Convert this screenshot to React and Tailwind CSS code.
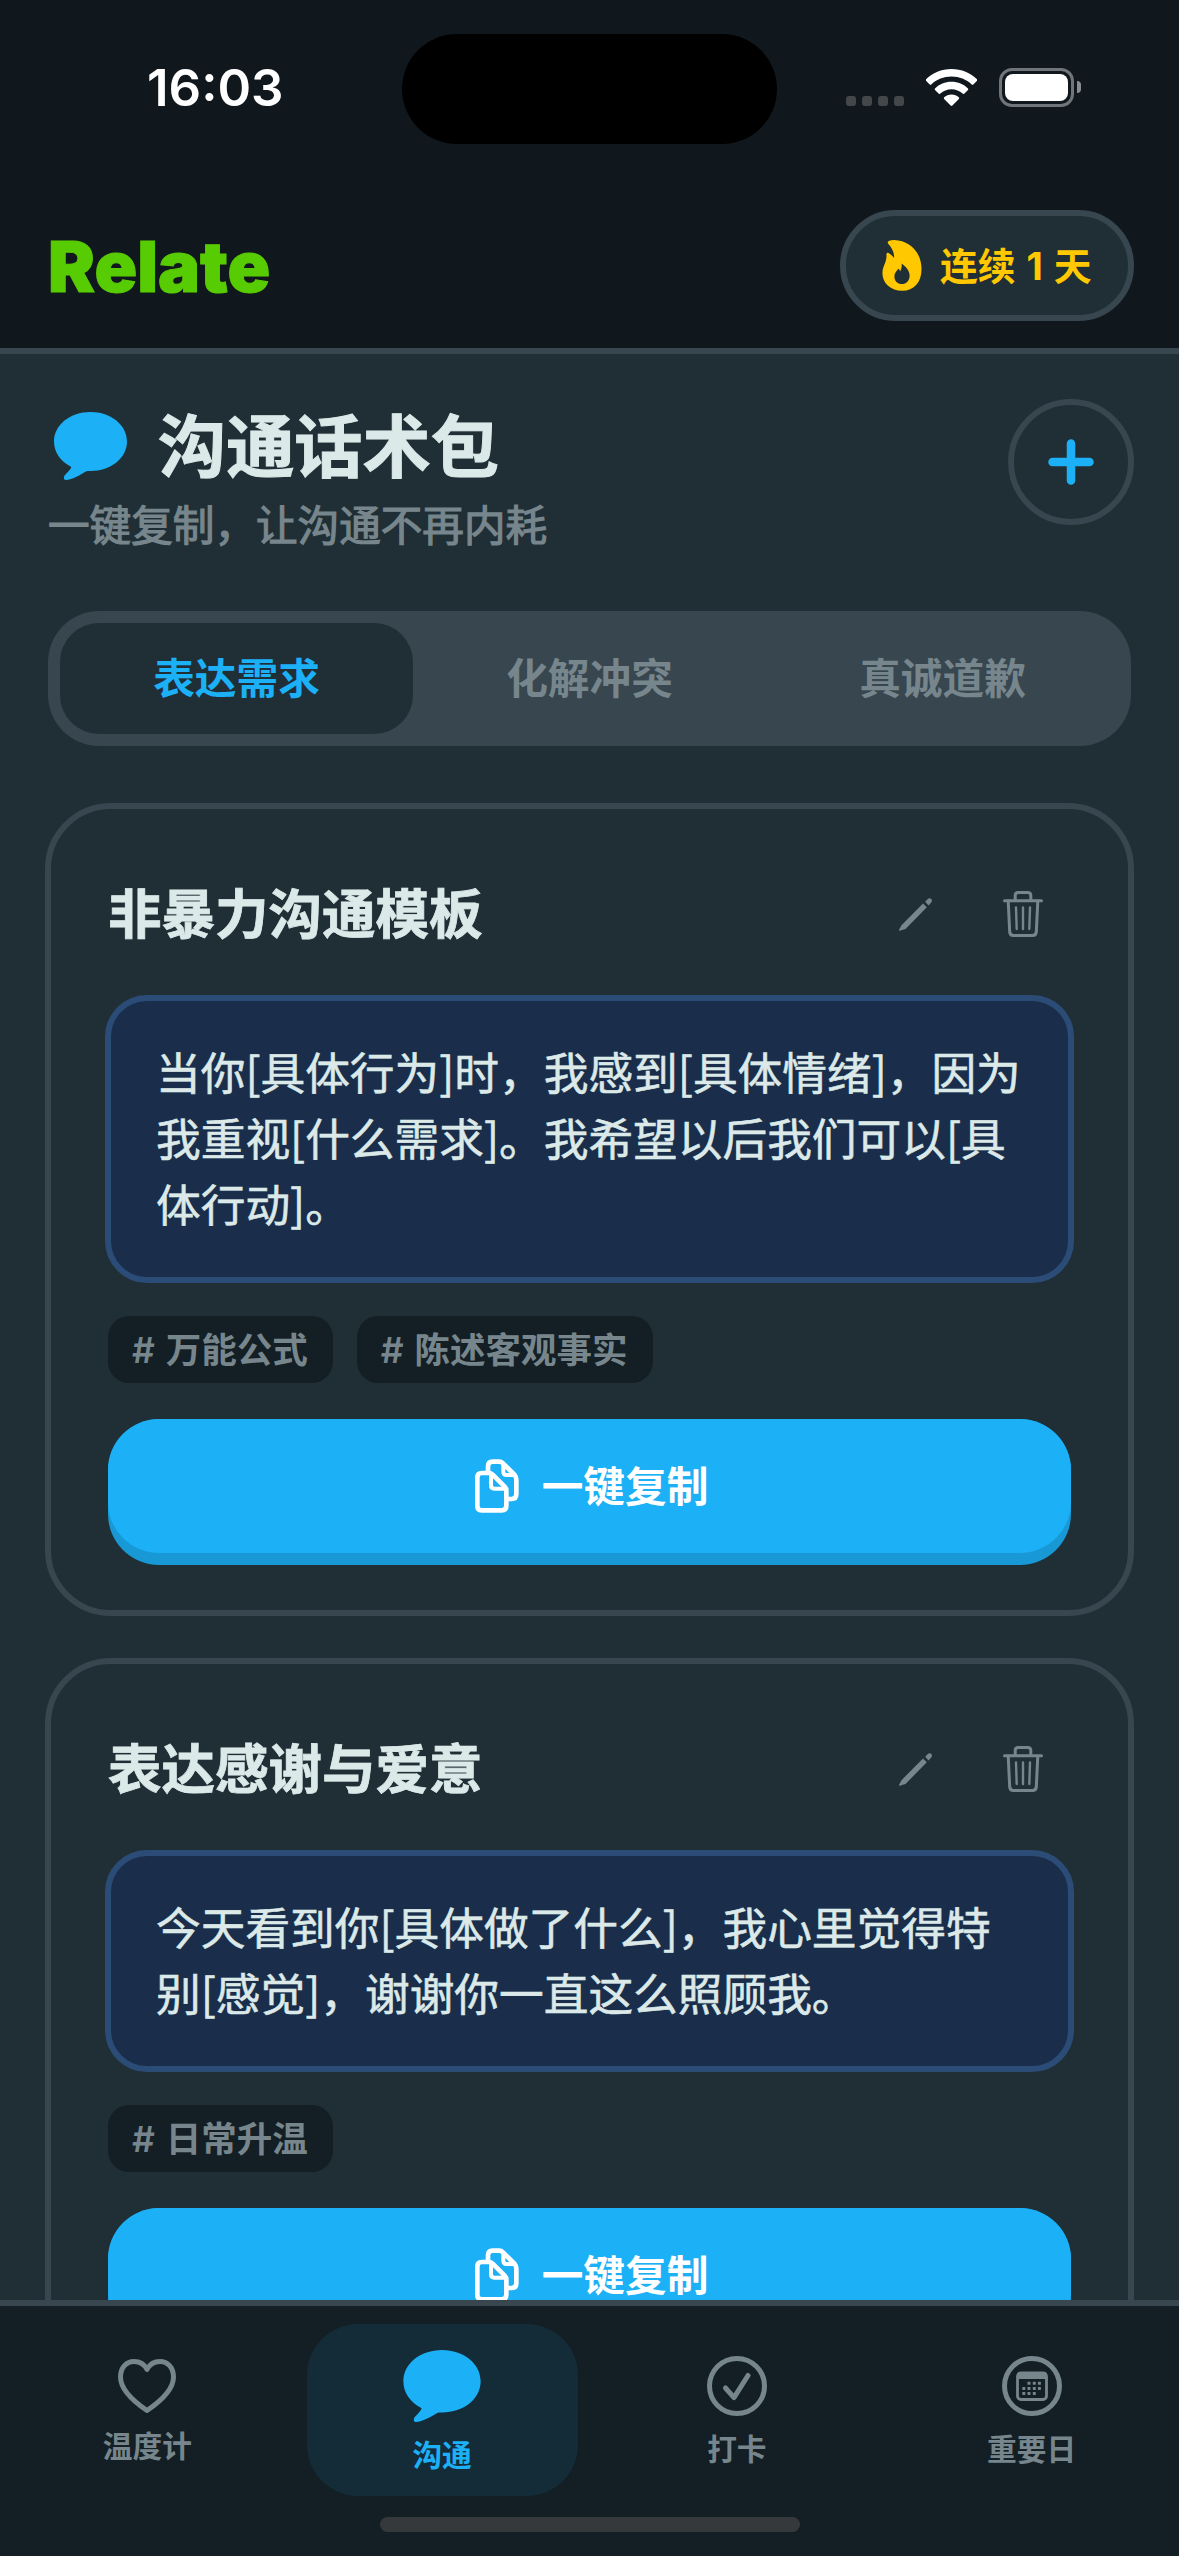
import React, { useState } from 'react';

const BubbleIcon = ({ className }) => (
  <svg className={className} viewBox="0 0 73 68" fill="#1cb0f6">
    <path d="M36.5 0C57 0 73 13 73 29.5S57 59 36.5 59C35 59 33.5 58.8 32 59.5C26 63 18 67.800 12 68C9.500 68 9.300 65 11 63C14 60 16.500 57.500 17.300 55C6 49 0 40 0 29.500C0 13 16 0 36.500 0Z" />
  </svg>
);

const FlameIcon = () => (
  <svg className="w-10 h-[51px]" viewBox="38 30 120 154" fill="#ffc800">
    <path
      fillRule="evenodd"
      d="M75 30C120 32 157 66 157 118C157 158 133 183 99 183C64 183 39 160 39 131C39 108 53 98 51 74C51 68 56 67 60 71C66 75 70 79 74 84C75 68 68 55 57 42C51 35 57 30 75 30ZM97 101C109 110 121 122 121 137C121 153 111 163 98 163C84 163 75 153 75 140C75 131 80 126 87 117C89 118 92 121 92 125C96 118 98 110 97 101Z"
    />
  </svg>
);

const CopyIcon = () => (
  <svg className="w-11 h-[54px]" viewBox="30 28 132 162" fill="none" stroke="white" strokeWidth="14" strokeLinejoin="round">
    <path d="M50 70H72Q78 70 83 75L119 111Q124 116 124 122V168Q124 182 110 182H50Q37 182 37 168V84Q37 70 50 70Z" />
    <path d="M78 72V107Q78 117 88 117H124" strokeWidth="12" />
    <path d="M69 68V50Q69 36 83 36H103Q109 36 114 41L149 76Q154 82 154 89V134Q154 148 140 148H128" />
    <path d="M115 42V66Q115 76 125 76H150" strokeWidth="12" />
  </svg>
);

const PencilIcon = () => (
  <svg className="w-[33px] h-[33px]" viewBox="0 0 33 33" fill="#77868c">
    <path d="M24 5.500L27.800 9.300L6.500 31C4 31.600 2 32.500 0.500 32.800C-0.200 32.800 0 32 0.300 31.200L2.500 27.200Z" />
    <path d="M26.200 3.800L28.500 1.200C30 -0.200 31.400 0.200 32.300 1.100C33.200 2.200 33.200 3.500 32 4.800L29.500 7.400Z" />
  </svg>
);

const TrashIcon = () => (
  <svg className="w-10 h-[46px]" viewBox="0 0 40 46" fill="none" stroke="#77868c" strokeWidth="3" strokeLinecap="round" strokeLinejoin="round">
    <path d="M1.500 9.800H38.500" />
    <path d="M12.200 9.500V4.500Q12.200 1.500 15.200 1.500H24.800Q27.800 1.500 27.800 4.500V9.500" />
    <path d="M5.200 10L6.700 41Q7 44.500 10.500 44.500H29.500Q33 44.500 33.300 41L34.800 10" />
    <path d="M13 16.500L13.700 38M20 16.500V38M27 16.500L26.300 38" strokeWidth="2.400" />
  </svg>
);

const HeartIcon = () => (
  <svg className="w-[58px] h-[54px]" viewBox="0 0 58 54" fill="none" stroke="#77868c" strokeWidth="5" strokeLinejoin="round">
    <path d="M29 51.500C12 40 2.500 29.500 2.500 18C2.500 8.500 8.500 2.500 16 2.500C22 2.500 26.500 5.500 29 10.500C31.500 5.500 36 2.500 42 2.500C49.500 2.500 55.500 8.500 55.500 18C55.500 29.500 46 40 29 51.500Z" />
  </svg>
);

const CheckCircleIcon = () => (
  <svg className="w-[60px] h-[60px]" viewBox="0 0 60 60" fill="none" stroke="#77868c" strokeWidth="5">
    <circle cx="30" cy="30" r="27.500" />
    <path d="M18.500 32L27 41.700L41 19.500" strokeLinecap="round" strokeLinejoin="round" />
  </svg>
);

const CalendarCircleIcon = () => {
  const dots = [
    [27, 27.3], [32.3, 27.3], [37.4, 27.3],
    [21.8, 32.4], [27, 32.4], [32.3, 32.4], [37.4, 32.4],
    [21.8, 37.4], [27, 37.4], [32.3, 37.4],
  ];
  return (
    <svg className="w-[60px] h-[60px]" viewBox="0 0 60 60" fill="#77868c">
      <circle cx="30" cy="30" r="27.500" fill="none" stroke="#77868c" strokeWidth="5" />
      <rect x="15.500" y="17" width="29" height="26.500" rx="3.500" fill="none" stroke="#77868c" strokeWidth="2.800" />
      <path d="M15 23V19Q15 16 18 16H42Q45 16 45 19V23Z" />
      {dots.map(([x, y]) => (
        <rect key={`${x}-${y}`} x={x - 1.5} y={y - 1.5} width="3" height="3" rx="0.600" />
      ))}
    </svg>
  );
};

const StatusBar = () => (
  <div className="h-[177px] flex items-start">
    <div className="w-[402px] pt-[57px] pl-[147px] text-[51px] leading-[62px] font-semibold text-white">16:03</div>
    <div className="mt-[34px] w-[375px] h-[110px] rounded-full bg-black"></div>
    <div className="flex pt-[67px] pl-[69px]">
      <div className="flex gap-1.5 mt-[29px]">
        {[0, 1, 2, 3].map((i) => (
          <div key={i} className="w-2.5 h-2.5 rounded-[3px] bg-[#434749]"></div>
        ))}
      </div>
      <svg className="w-[51px] h-[38px] ml-[22px] mt-[2px]" viewBox="0 0 51 38" fill="white">
        <path d="M25.500 0C35.500 0 44.500 4 51 10.200Q51.600 11 51 11.800L47.300 15.500Q46.500 16 45.700 15.400C40.400 10.500 33.300 7.600 25.500 7.600S10.600 10.500 5.300 15.400Q4.500 16 3.700 15.500L0 11.800Q-0.600 11 0 10.200C6.500 4 15.500 0 25.500 0Z" />
        <path d="M25.500 12.800C31.900 12.800 37.700 15.300 42 19.400Q42.600 20.200 42 21L38.200 24.700Q37.400 25.300 36.600 24.600C33.700 21.900 29.800 20.300 25.500 20.300S17.300 21.900 14.400 24.600Q13.600 25.300 12.800 24.700L9 21Q8.400 20.200 9 19.400C13.300 15.300 19.100 12.800 25.500 12.800Z" />
        <path d="M25.500 25.500C28.400 25.500 31 26.600 32.900 28.300Q33.500 29.100 32.900 29.900L26.400 36.600Q25.500 37.400 24.600 36.600L18.100 29.900Q17.500 29.100 18.100 28.300C20 26.600 22.600 25.500 25.500 25.500Z" />
      </svg>
      <div className="ml-[22px] mt-[1px] w-[75px] h-[39px] rounded-[13px] border-[3px] border-[#70757a] p-[3px]">
        <div className="w-full h-full rounded-[8px] bg-white"></div>
      </div>
      <div className="ml-[3px] mt-[14px] w-1 h-3 rounded-r-full bg-[#8a8e91]"></div>
    </div>
  </div>
);

const AppHeader = () => (
  <div className="h-[177px] pt-[33px] pl-12 pr-[45px] flex items-start justify-between border-b-[6px] border-[#37464f]">
    <h1 className="pt-[17px] text-[70.5px] leading-[80px] font-black text-[#58cc02] [-webkit-text-stroke:1px_#58cc02]">Relate</h1>
    <div className="w-[294px] h-[111px] rounded-full border-[6px] border-[#37464f] bg-[#202f36] flex items-center pl-[36px] gap-[18px]">
      <FlameIcon />
      <span className="text-[37.8px] leading-[50px] font-bold text-[#ffc800] whitespace-nowrap [word-spacing:2px]">连续 1 天</span>
    </div>
  </div>
);

const TABS = ['表达需求', '化解冲突', '真诚道歉'];

const SegmentedTabs = ({ active, onChange }) => (
  <div className="mt-[50px] h-[135px] p-3 rounded-[51px] bg-[#37464f] grid grid-cols-3">
    {TABS.map((tab, index) => (
      <button
        key={tab}
        onClick={() => onChange(index)}
        className={`rounded-[39px] text-[41.7px] leading-[60px] font-bold ${
          index === active ? 'bg-[#202f36] text-[#1cb0f6]' : 'text-[#77868c]'
        }`}
      >
        {tab}
      </button>
    ))}
  </div>
);

const scripts = [
  {
    title: '非暴力沟通模板',
    content: '当你[具体行为]时，我感到[具体情绪]，因为我重视[什么需求]。我希望以后我们可以[具体行动]。',
    tags: ['万能公式', '陈述客观事实'],
  },
  {
    title: '表达感谢与爱意',
    content: '今天看到你[具体做了什么]，我心里觉得特别[感觉]，谢谢你一直这么照顾我。',
    tags: ['日常升温'],
  },
];

const ScriptCard = ({ script }) => (
  <div className="-mx-[3px] shrink-0 rounded-[66px] border-[6px] border-[#37464f] px-[57px] pt-6 pb-[45px]">
    <div className="h-[162px] flex items-center justify-between">
      <h3 className="pt-[2px] text-[53.5px] leading-[72px] font-bold text-[#dce9e9] [-webkit-text-stroke:0.8px_#dce9e9]">
        {script.title}
      </h3>
      <div className="flex gap-3">
        <button className="w-24 h-24 flex items-center justify-center"><PencilIcon /></button>
        <button className="w-24 h-24 flex items-center justify-center"><TrashIcon /></button>
      </div>
    </div>

    <div className="-mx-[3px] rounded-[42px] border-[6px] border-[#2b4c76] bg-[#1a2e4b] px-[45px] pt-[37px] pb-[41px]">
      <p className="font-['Noto_Sans_CJK_SC',sans-serif] text-[44.7px] leading-[66px] text-[#dce9e9] [-webkit-text-stroke:0.6px_#dce9e9]">
        {script.content}
      </p>
    </div>

    <div className="mt-[33px] flex gap-6">
      {script.tags.map((tag) => (
        <span key={tag} className="h-[67px] pl-6 pr-[25px] pt-px rounded-[21px] bg-[#131f24] text-[35.5px] leading-[67px] font-semibold text-[#77868c] [word-spacing:2px]">
          # {tag}
        </span>
      ))}
    </div>

    {/* Botón con relieve inferior */}
    <button className="mt-9 w-full h-[146px] rounded-[51px] bg-[#1899d6] flex items-start">
      <span className="w-full h-[134px] pl-[4px] rounded-[51px] bg-[#1cb0f6] flex items-center justify-center gap-[23px] text-[41.7px] leading-[60px] font-bold text-white">
        <CopyIcon />
        <span className="pt-[2px]">一键复制</span>
      </span>
    </button>
  </div>
);

const NAV_ITEMS = [
  { label: '温度计', icon: <HeartIcon /> },
  { label: '沟通', icon: <BubbleIcon className="w-[78px] h-[72px]" />, active: true },
  { label: '打卡', icon: <CheckCircleIcon /> },
  { label: '重要日', icon: <CalendarCircleIcon /> },
];

const BottomNav = () => (
  <nav className="h-[256px] shrink-0 border-t-[6px] border-[#37464f] bg-[#131f24]">
    <div className="pt-[18px] grid grid-cols-4">
      {NAV_ITEMS.map((item) => (
        <div
          key={item.label}
          className={`mx-3 h-[172px] pt-[3px] rounded-[51px] flex flex-col items-center justify-center gap-[15px] text-[29.7px] leading-[36px] font-semibold ${
            item.active ? 'bg-[#142c38] text-[#1cb0f6]' : 'text-[#77868c]'
          }`}
        >
          {item.icon}
          <span>{item.label}</span>
        </div>
      ))}
    </div>
    <div className="mt-[21px] mx-auto w-[420px] h-[15px] rounded-full bg-[#36393b]"></div>
  </nav>
);

const App = () => {
  const [activeTab, setActiveTab] = useState(0);

  return (
    <div className="w-[1179px] h-[2556px] overflow-hidden flex flex-col bg-[#202f36] font-[Inter,'Noto_Sans_CJK_SC',sans-serif]">
      <header className="shrink-0 bg-[#10181d]">
        <StatusBar />
        <AppHeader />
      </header>

      <main className="flex-1 min-h-0 overflow-hidden px-12 pt-[45px]">
        <div className="flex items-start justify-between -mr-[3px]">
          <div>
            <div className="h-[94px] pl-1.5 flex items-center gap-[31px]">
              <BubbleIcon className="w-[73px] h-[68px]" />
              <h2 className="pt-px text-[68.200px] leading-[94px] font-bold text-[#dce9e9] [-webkit-text-stroke:1px_#dce9e9]">沟通话术包</h2>
            </div>
            <p className="text-[41.6px] leading-[66px] text-[#77868c] [-webkit-text-stroke:1.2px_#77868c]">一键复制，让沟通不再内耗</p>
          </div>
          <button className="w-[126px] h-[126px] rounded-full border-[6px] border-[#37464f] flex items-center justify-center">
            <svg className="w-[46px] h-[46px]" viewBox="0 0 46 46" stroke="#1cb0f6" strokeWidth="8.500" strokeLinecap="round">
              <path d="M23 4.500V41.500M4.500 23H41.500" />
            </svg>
          </button>
        </div>

        <div className="pt-0.5">
          <SegmentedTabs active={activeTab} onChange={setActiveTab} />
        </div>

        <div className="mt-[57px] flex flex-col gap-[42px]">
          {scripts.map((script) => (
            <ScriptCard key={script.title} script={script} />
          ))}
        </div>
      </main>

      <BottomNav />
    </div>
  );
};

export default App;
